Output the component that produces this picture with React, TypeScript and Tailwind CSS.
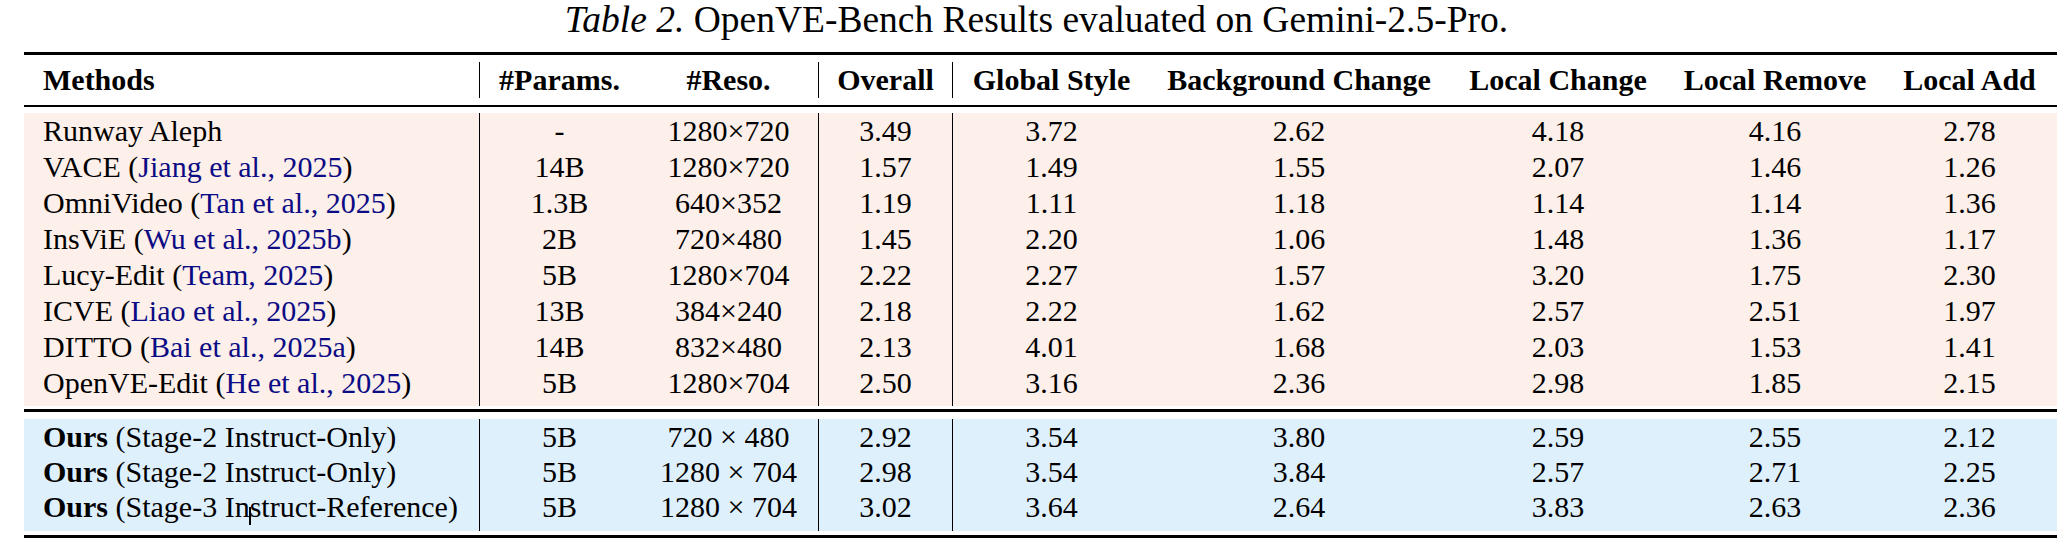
import React from 'react';

type Row = {
  name: string;
  cite?: string;
  bold?: boolean;
  cursor?: boolean;
  params: string;
  reso: string;
  scores: string[];
};

const baseline: Row[] = [
  { name: 'Runway Aleph', params: '-', reso: '1280×720', scores: ['3.49', '3.72', '2.62', '4.18', '4.16', '2.78'] },
  { name: 'VACE', cite: 'Jiang et al., 2025', params: '14B', reso: '1280×720', scores: ['1.57', '1.49', '1.55', '2.07', '1.46', '1.26'] },
  { name: 'OmniVideo', cite: 'Tan et al., 2025', params: '1.3B', reso: '640×352', scores: ['1.19', '1.11', '1.18', '1.14', '1.14', '1.36'] },
  { name: 'InsViE', cite: 'Wu et al., 2025b', params: '2B', reso: '720×480', scores: ['1.45', '2.20', '1.06', '1.48', '1.36', '1.17'] },
  { name: 'Lucy-Edit', cite: 'Team, 2025', params: '5B', reso: '1280×704', scores: ['2.22', '2.27', '1.57', '3.20', '1.75', '2.30'] },
  { name: 'ICVE', cite: 'Liao et al., 2025', params: '13B', reso: '384×240', scores: ['2.18', '2.22', '1.62', '2.57', '2.51', '1.97'] },
  { name: 'DITTO', cite: 'Bai et al., 2025a', params: '14B', reso: '832×480', scores: ['2.13', '4.01', '1.68', '2.03', '1.53', '1.41'] },
  { name: 'OpenVE-Edit', cite: 'He et al., 2025', params: '5B', reso: '1280×704', scores: ['2.50', '3.16', '2.36', '2.98', '1.85', '2.15'] },
];

const ours: Row[] = [
  { name: 'Stage-2 Instruct-Only', bold: true, params: '5B', reso: '720 × 480', scores: ['2.92', '3.54', '3.80', '2.59', '2.55', '2.12'] },
  { name: 'Stage-2 Instruct-Only', bold: true, params: '5B', reso: '1280 × 704', scores: ['2.98', '3.54', '3.84', '2.57', '2.71', '2.25'] },
  { name: 'Stage-3 Instruct-Reference', bold: true, cursor: true, params: '5B', reso: '1280 × 704', scores: ['3.02', '3.64', '2.64', '3.83', '2.63', '2.36'] },
];

const headers = ['#Params.', '#Reso.', 'Overall', 'Global Style', 'Background Change', 'Local Change', 'Local Remove', 'Local Add'];

// columns 2, 4 and 5 carry the vertical rule
const ruled = [true, false, true, true, false, false, false, false];

const grid = 'grid grid-cols-[455px_160px_179px_134px_198px_298px_220px_214px_175px]';

function MethodCell({ row }: { row: Row }) {
  if (row.bold) {
    const [before, after] = row.cursor ? ['Stage-3 In', 'struct-Reference'] : [row.name, ''];
    return (
      <>
        <span className="font-bold">Ours</span> ({before}
        {row.cursor && <span className="inline-block w-[2px] h-[18px] bg-black align-[-8px] -mx-[1px]" />}
        {after})
      </>
    );
  }
  return (
    <>
      {row.name}
      {row.cite && (
        <>
          {' '}(<span className="text-[#0b0b85]">{row.cite}</span>)
        </>
      )}
    </>
  );
}

function Section({ rows, bg, rowLeading, lastPad }: { rows: Row[]; bg: string; rowLeading: string; lastPad: string }) {
  return (
    <div className={`${grid} ${bg}`}>
      {rows.map((row, i) => {
        const last = i === rows.length - 1;
        const cell = `${rowLeading} ${last ? lastPad : ''}`;
        const values = [row.params, row.reso, ...row.scores];
        return (
          <React.Fragment key={i}>
            <div className={`${cell} pl-[19px] whitespace-nowrap`}>
              <MethodCell row={row} />
            </div>
            {values.map((v, j) => (
              <div key={j} className={`${cell} text-center whitespace-nowrap ${ruled[j] ? 'border-l border-black' : ''}`}>
                {v}
              </div>
            ))}
          </React.Fragment>
        );
      })}
    </div>
  );
}

export default function App() {
  return (
    <div className="min-h-screen bg-white text-black font-['Liberation_Serif',serif]">
      <div className="ml-[24px] w-[2033px]">
        <p className="text-center text-[37.5px] leading-[40px] whitespace-nowrap pr-[8px]">
          <i>Table 2.</i> OpenVE-Bench Results evaluated on Gemini-2.5-Pro.
        </p>

        <div className="mt-[12px] border-t-[3px] border-black" />

        <div className={`${grid} py-[7px] text-[30px] font-bold`}>
          <div className="leading-[36px] pl-[19px]">Methods</div>
          {headers.map((h, j) => (
            <div key={h} className={`leading-[36px] text-center whitespace-nowrap ${ruled[j] ? 'border-l border-black' : ''}`}>
              {h}
            </div>
          ))}
        </div>

        <div className="border-t-[2px] border-black" />

        <div className="mt-[6px] text-[30px]">
          <Section rows={baseline} bg="bg-[#fdefe9]" rowLeading="leading-[36px]" lastPad="pb-[5px]" />
        </div>

        <div className="mt-[3px] border-t-[3px] border-black" />

        <div className="mt-[7px] text-[30px]">
          <Section rows={ours} bg="bg-[#dff0fd]" rowLeading="leading-[35px]" lastPad="pb-[6px]" />
        </div>

        <div className="mt-[4px] border-t-[3px] border-black" />
      </div>
    </div>
  );
}
